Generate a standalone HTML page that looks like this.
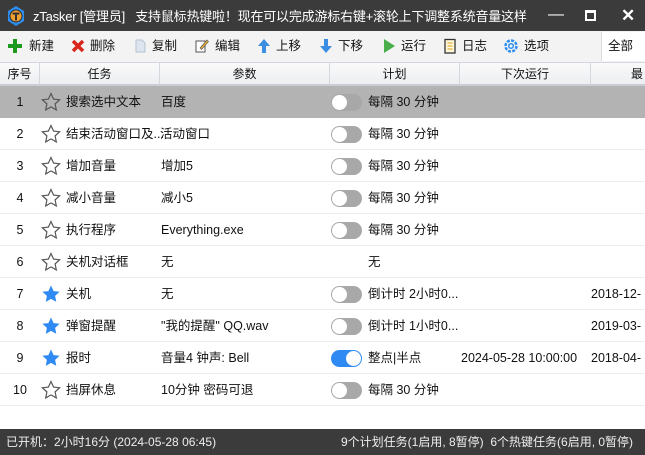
<!DOCTYPE html>
<html><head><meta charset="utf-8"><style>
*{margin:0;padding:0;box-sizing:border-box}
body{width:645px;height:455px;overflow:hidden;background:#fff;font-family:"Liberation Sans","Noto Sans CJK SC",sans-serif;font-size:12px;color:#111;position:relative}
.title{position:absolute;left:0;top:0;width:645px;height:31px;background:#3b3b3b;color:#fff;font-size:13px}
.title span{position:absolute;top:0;line-height:33px;white-space:nowrap}
.tb{position:absolute;top:31px;left:0;width:645px;height:31px;background:#f3f3f3}
.tb .it{position:absolute;top:0;line-height:31px;font-size:12.5px;white-space:nowrap}
.ico{position:absolute;top:7px;width:16px;height:16px}
.all{position:absolute;left:601px;top:32px;width:44px;height:29px;background:#fff;border-left:1px solid #ddd;padding-left:6px;line-height:28px;font-size:12.5px}
.hdr{position:absolute;top:62px;left:0;width:645px;height:24px;background:linear-gradient(#fafafa,#eceef2);border-top:1px solid #d4d8de;border-bottom:2px solid #c9ced6}
.hdr div{position:absolute;top:0;height:22px;line-height:22px;text-align:center;border-right:1px solid #d4d8de;font-size:12px}
.row{position:absolute;left:0;width:645px;height:32px;border-bottom:1px solid #ececec}
.row span{position:absolute;top:0;line-height:32px;white-space:nowrap;font-size:12.5px}
.n{width:40px;text-align:center;left:0}
.tg{position:absolute;left:331px;top:8px;width:31px;height:17px;border-radius:9px;background:#a8a8a8}
.tg:after{content:"";position:absolute;left:1px;top:1px;width:15px;height:15px;border-radius:50%;background:#fff}
.tg.on{background:#2f8af3}.tg.on:after{left:15px}
.st{position:absolute;left:41px;top:6px}
.sb{position:absolute;left:0;top:429px;width:645px;height:26px;background:#3b3b3b;color:#eee;font-size:12px}
.sb span{position:absolute;top:0;line-height:26px;white-space:nowrap}
</style></head><body>
<div class="title">
<svg style="position:absolute;left:6px;top:6px" width="20" height="20" viewBox="0 0 20 20"><polygon points="10,0 18,5 18,15 10,20 2,15 2,5" fill="#2d8ef0"/><circle cx="10" cy="10" r="6.5" fill="#2b2b2b"/><circle cx="10" cy="10" r="5.5" fill="#f0a030"/><path d="M6.5 6.5h7v2h-2.5v6h-2v-6h-2.5z" fill="#333"/></svg>
<span style="left:33px;letter-spacing:-0.2px">zTasker [管理员]&nbsp;&nbsp; 支持鼠标热键啦！现在可以完成游标右键+滚轮上下调整系统音量这样</span>
<span style="left:548px;line-height:30px;font-size:16px">—</span>
<span style="left:585px;top:10px;width:11px;height:11px;border:2px solid #fff;border-top-width:3px"></span>
<span style="left:621px;line-height:32px;font-size:17px;font-weight:bold">✕</span>
</div>
<div class="tb">
<svg class="ico" style="left:7px" viewBox="0 0 16 16"><path d="M6 1h4v5h5v4h-5v5H6v-5H1V6h5z" fill="#1d9a1d"/></svg><span class="it" style="left:29px">新建</span>
<svg class="ico" style="left:70px" viewBox="0 0 16 16"><path d="M3 3l10 10M13 3L3 13" stroke="#d8261c" stroke-width="3.5"/></svg><span class="it" style="left:90px">删除</span>
<svg class="ico" style="left:132px" viewBox="0 0 16 16"><path d="M4 2h6l3 3v9H4z" fill="#dde6f0" stroke="#b5c2d2"/></svg><span class="it" style="left:152px">复制</span>
<svg class="ico" style="left:194px" viewBox="0 0 16 16"><path d="M2 3h9v11H2z" fill="#fff" stroke="#555"/><path d="M6 10l7-8 1.5 1.5-7 8z" fill="#e8b030" stroke="#555" stroke-width=".6"/></svg><span class="it" style="left:215px">编辑</span>
<svg class="ico" style="left:256px" viewBox="0 0 16 16"><path d="M8 1l6 7h-4v7H6V8H2z" fill="#3a8de0"/></svg><span class="it" style="left:276px">上移</span>
<svg class="ico" style="left:318px" viewBox="0 0 16 16"><path d="M8 15l6-7h-4V1H6v7H2z" fill="#3a8de0"/></svg><span class="it" style="left:338px">下移</span>
<svg class="ico" style="left:381px" viewBox="0 0 16 16"><path d="M3 1l11 7-11 7z" fill="#4aae4a"/></svg><span class="it" style="left:401px">运行</span>
<svg class="ico" style="left:442px" viewBox="0 0 16 16"><rect x="3" y="1.5" width="10" height="13.5" fill="#fff8d8" stroke="#333" stroke-width="1.3"/><path d="M5.5 5h5M5.5 8h5M5.5 11h5" stroke="#d9a020"/></svg><span class="it" style="left:462px">日志</span>
<svg class="ico" style="left:503px" viewBox="0 0 16 16"><circle cx="8" cy="8" r="5.5" fill="none" stroke="#2d8ef0" stroke-width="2.5" stroke-dasharray="3 1.3"/><circle cx="8" cy="8" r="2.3" fill="none" stroke="#2d8ef0" stroke-width="1.5"/></svg><span class="it" style="left:524px">选项</span>
</div>
<div class="all">全部</div>
<div class="hdr">
<div style="left:0;width:40px">序号</div><div style="left:40px;width:120px">任务</div><div style="left:160px;width:170px">参数</div><div style="left:330px;width:130px">计划</div><div style="left:460px;width:131px">下次运行</div><div style="left:591px;width:80px;text-align:left;padding-left:40px">最</div>
</div>

<div class="row" style="top:86px;background:#b3b3b3;border:0"><span class="n">1</span><svg class="st" width="20" height="20" viewBox="0 0 20 20"><path d="M10 1.5l2.6 5.6 6 .7-4.5 4.1 1.2 6-5.3-3-5.3 3 1.2-6-4.5-4.1 6-.7z" fill="none" stroke="#555" stroke-width="1.2"/></svg><span style="left:66px">搜索选中文本</span><span style="left:161px">百度</span><div class="tg"></div><span style="left:368px">每隔 30 分钟</span></div>
<div class="row" style="top:118px"><span class="n">2</span><svg class="st" width="20" height="20" viewBox="0 0 20 20"><path d="M10 1.5l2.6 5.6 6 .7-4.5 4.1 1.2 6-5.3-3-5.3 3 1.2-6-4.5-4.1 6-.7z" fill="none" stroke="#555" stroke-width="1.2"/></svg><span style="left:66px">结束活动窗口及...</span><span style="left:160px">活动窗口</span><div class="tg"></div><span style="left:368px">每隔 30 分钟</span></div>
<div class="row" style="top:150px"><span class="n">3</span><svg class="st" width="20" height="20" viewBox="0 0 20 20"><path d="M10 1.5l2.6 5.6 6 .7-4.5 4.1 1.2 6-5.3-3-5.3 3 1.2-6-4.5-4.1 6-.7z" fill="none" stroke="#555" stroke-width="1.2"/></svg><span style="left:66px">增加音量</span><span style="left:161px">增加5</span><div class="tg"></div><span style="left:368px">每隔 30 分钟</span></div>
<div class="row" style="top:182px"><span class="n">4</span><svg class="st" width="20" height="20" viewBox="0 0 20 20"><path d="M10 1.5l2.6 5.6 6 .7-4.5 4.1 1.2 6-5.3-3-5.3 3 1.2-6-4.5-4.1 6-.7z" fill="none" stroke="#555" stroke-width="1.2"/></svg><span style="left:66px">减小音量</span><span style="left:161px">减小5</span><div class="tg"></div><span style="left:368px">每隔 30 分钟</span></div>
<div class="row" style="top:214px"><span class="n">5</span><svg class="st" width="20" height="20" viewBox="0 0 20 20"><path d="M10 1.5l2.6 5.6 6 .7-4.5 4.1 1.2 6-5.3-3-5.3 3 1.2-6-4.5-4.1 6-.7z" fill="none" stroke="#555" stroke-width="1.2"/></svg><span style="left:66px">执行程序</span><span style="left:161px">Everything.exe</span><div class="tg"></div><span style="left:368px">每隔 30 分钟</span></div>
<div class="row" style="top:246px"><span class="n">6</span><svg class="st" width="20" height="20" viewBox="0 0 20 20"><path d="M10 1.5l2.6 5.6 6 .7-4.5 4.1 1.2 6-5.3-3-5.3 3 1.2-6-4.5-4.1 6-.7z" fill="none" stroke="#555" stroke-width="1.2"/></svg><span style="left:66px">关机对话框</span><span style="left:161px">无</span><span style="left:368px">无</span></div>
<div class="row" style="top:278px"><span class="n">7</span><svg class="st" width="20" height="20" viewBox="0 0 20 20"><path d="M10 1.5l2.6 5.6 6 .7-4.5 4.1 1.2 6-5.3-3-5.3 3 1.2-6-4.5-4.1 6-.7z" fill="#2f8af3"/></svg><span style="left:66px">关机</span><span style="left:161px">无</span><div class="tg"></div><span style="left:368px">倒计时 2小时0...</span><span style="left:591px">2018-12-</span></div>
<div class="row" style="top:310px"><span class="n">8</span><svg class="st" width="20" height="20" viewBox="0 0 20 20"><path d="M10 1.5l2.6 5.6 6 .7-4.5 4.1 1.2 6-5.3-3-5.3 3 1.2-6-4.5-4.1 6-.7z" fill="#2f8af3"/></svg><span style="left:66px">弹窗提醒</span><span style="left:161px">"我的提醒" QQ.wav</span><div class="tg"></div><span style="left:368px">倒计时 1小时0...</span><span style="left:591px">2019-03-</span></div>
<div class="row" style="top:342px"><span class="n">9</span><svg class="st" width="20" height="20" viewBox="0 0 20 20"><path d="M10 1.5l2.6 5.6 6 .7-4.5 4.1 1.2 6-5.3-3-5.3 3 1.2-6-4.5-4.1 6-.7z" fill="#2f8af3"/></svg><span style="left:66px">报时</span><span style="left:161px">音量4 钟声: Bell</span><div class="tg on"></div><span style="left:368px">整点|半点</span><span style="left:461px">2024-05-28 10:00:00</span><span style="left:591px">2018-04-</span></div>
<div class="row" style="top:374px"><span class="n">10</span><svg class="st" width="20" height="20" viewBox="0 0 20 20"><path d="M10 1.5l2.6 5.6 6 .7-4.5 4.1 1.2 6-5.3-3-5.3 3 1.2-6-4.5-4.1 6-.7z" fill="none" stroke="#555" stroke-width="1.2"/></svg><span style="left:66px">挡屏休息</span><span style="left:161px">10分钟 密码可退</span><div class="tg"></div><span style="left:368px">每隔 30 分钟</span></div>

<div class="sb"><span style="left:6px">已开机：2小时16分 (2024-05-28 06:45)</span><span style="left:341px">9个计划任务(1启用, 8暂停)&nbsp; 6个热键任务(6启用, 0暂停)</span></div>
</body></html>
